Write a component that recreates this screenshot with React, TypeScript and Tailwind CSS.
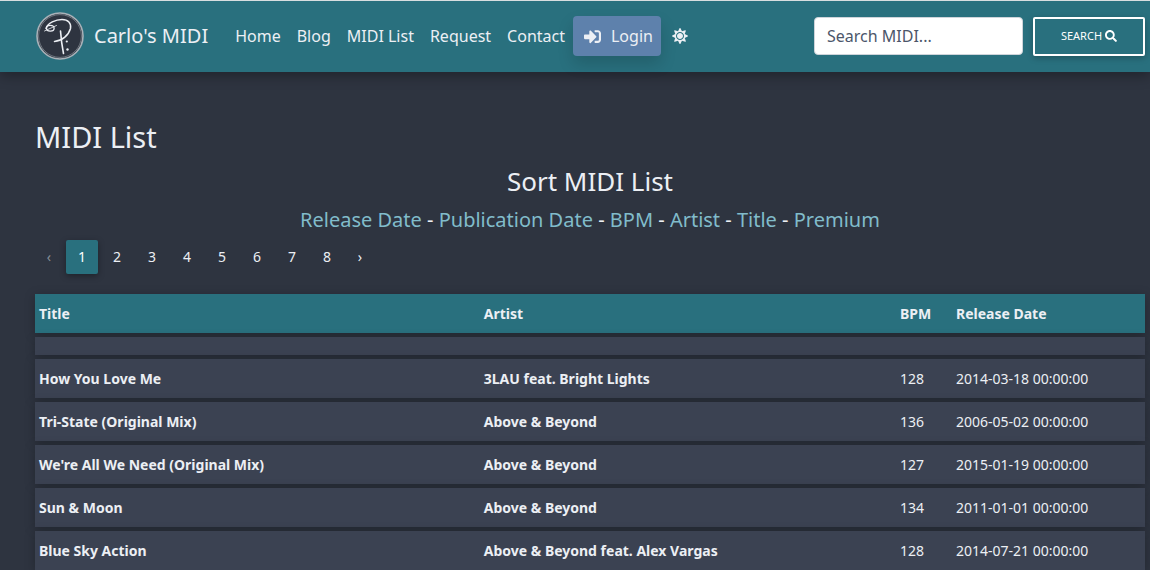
import React from "react";
import { FaSearch, FaSignInAlt, FaSun } from "react-icons/fa";

const navItems = ["Home", "Blog", "MIDI List", "Request", "Contact"];
const sortKeys = ["Release Date", "Publication Date", "BPM", "Artist", "Title", "Premium"];
const pages = [1, 2, 3, 4, 5, 6, 7, 8];

type Track = { title: string; artist: string; bpm: number; date: string };

const tracks: Track[] = [
  { title: "How You Love Me", artist: "3LAU feat. Bright Lights", bpm: 128, date: "2014-03-18 00:00:00" },
  { title: "Tri-State (Original Mix)", artist: "Above & Beyond", bpm: 136, date: "2006-05-02 00:00:00" },
  { title: "We're All We Need (Original Mix)", artist: "Above & Beyond", bpm: 127, date: "2015-01-19 00:00:00" },
  { title: "Sun & Moon", artist: "Above & Beyond", bpm: 134, date: "2011-01-01 00:00:00" },
  { title: "Blue Sky Action", artist: "Above & Beyond feat. Alex Vargas", bpm: 128, date: "2014-07-21 00:00:00" },
];

function Logo() {
  return (
    <svg viewBox="0 0 48 48" className="size-12" aria-hidden="true">
      <circle cx="24" cy="24" r="23" fill="#2e3440" stroke="#a9b1b8" strokeWidth="1.6" />
      <circle cx="24" cy="24" r="21.4" fill="none" stroke="#7d858e" strokeWidth="0.8" />
      <g fill="none" stroke="#eceff4" strokeLinecap="round" strokeLinejoin="round">
        <path
          d="M10 16.5C11.5 11 20 7.5 26 7.5C32 7.5 35.5 11 34.5 16.5C32.5 23.5 26 29 18.5 29.5"
          strokeWidth="1.5"
        />
        <ellipse cx="14.3" cy="16.2" rx="3.8" ry="2.9" strokeWidth="1.3" />
        <path d="M8.5 19L20.5 13.5" strokeWidth="0.8" />
        <path d="M24.5 19C25 26 26 34 27.5 41.5" strokeWidth="1.6" />
      </g>
      <circle cx="30.8" cy="29.5" r="1.1" fill="#eceff4" />
      <circle cx="31.5" cy="37.5" r="1.2" fill="#eceff4" />
    </svg>
  );
}

function Header() {
  return (
    <header className="relative flex items-center border-t border-[#d8dee0] bg-[#29707e] pb-3 pl-9 pr-[5px] pt-[11px] shadow-[0_4px_12px_rgba(0,0,0,0.3)]">
      <a href="#home" className="mr-[19px] flex items-center gap-[10px] text-xl">
        <Logo />
        <span className="whitespace-nowrap">Carlo's MIDI</span>
      </a>
      <nav aria-label="Main" className="flex items-center whitespace-nowrap text-base">
        {navItems.map((item) => (
          <a key={item} href="#nav" className="px-2 py-2">
            {item}
          </a>
        ))}
        <a
          href="#login"
          className="flex h-10 items-center gap-[10px] rounded bg-[#5e81ac] pl-[11px] pr-2 shadow-[0_8px_16px_rgba(0,0,0,0.15)]"
        >
          <FaSignInAlt className="size-[17px]" />
          Login
        </a>
        <button type="button" aria-label="Toggle theme" className="px-[11px] py-2">
          <FaSun className="size-4" />
        </button>
      </nav>
      <form className="ml-auto flex items-center gap-[10px]" onSubmit={(e) => e.preventDefault()}>
        <input
          type="search"
          aria-label="Search MIDI"
          placeholder="Search MIDI..."
          className="h-[38px] w-[209px] rounded border border-[#ced4da] bg-white px-3 text-base text-[#495057] placeholder:text-[#4c566a]"
        />
        <button
          type="submit"
          className="flex h-[39px] w-28 items-center justify-center gap-[3px] rounded-[2px] border-2 border-white text-[11px] text-white shadow-[0_2px_6px_rgba(0,0,0,0.25)]"
        >
          SEARCH
          <FaSearch className="size-3" />
        </button>
      </form>
    </header>
  );
}

function Pagination() {
  return (
    <nav aria-label="Pages" className="flex h-[34px] gap-[3px] text-sm">
      <span className="flex w-7 items-center justify-center text-[#868e96]">‹</span>
      {pages.map((page) => (
        <a
          key={page}
          href="#page"
          aria-current={page === 1 ? "page" : undefined}
          className={
            page === 1
              ? "flex w-8 items-center justify-center rounded-[2px] bg-[#29707e] text-white shadow-[0_2px_6px_rgba(0,0,0,0.35)]"
              : "flex w-8 items-center justify-center"
          }
        >
          {page}
        </a>
      ))}
      <a href="#next" aria-label="Next page" className="flex w-7 items-center justify-center">
        ›
      </a>
    </nav>
  );
}

function TrackTable() {
  return (
    <table className="mt-4 w-full table-fixed border-separate border-spacing-x-0 border-spacing-y-1 text-left text-sm leading-[19px]">
      <colgroup>
        <col />
        <col className="w-[37.5%]" />
        <col className="w-14" />
        <col className="w-[193px]" />
      </colgroup>
      <thead>
        <tr className="bg-[#29707e] shadow-[0_2px_10px_rgba(0,0,0,0.25)]">
          {["Title", "Artist", "BPM", "Release Date"].map((heading) => (
            <th key={heading} className="px-1 py-[10px] font-bold">
              {heading}
            </th>
          ))}
        </tr>
      </thead>
      <tbody>
        <tr className="h-[18px] bg-[#3b4252] shadow-[0_2px_10px_rgba(0,0,0,0.25)]">
          <td colSpan={4} />
        </tr>
        {tracks.map((track) => (
          <tr key={track.title} className="bg-[#3b4252] shadow-[0_2px_10px_rgba(0,0,0,0.25)]">
            <td className="px-1 py-[10px] font-bold">
              <a href="#track">{track.title}</a>
            </td>
            <td className="px-1 py-[10px] font-bold">
              <a href="#artist">{track.artist}</a>
            </td>
            <td className="px-1 py-[10px]">{track.bpm}</td>
            <td className="px-1 py-[10px]">{track.date}</td>
          </tr>
        ))}
      </tbody>
    </table>
  );
}

export default function App() {
  return (
    <div className="h-screen overflow-hidden bg-[#2e3440] font-['Noto_Sans',sans-serif] text-[#eceff4]">
      <Header />
      <main className="pl-[35px] pr-[5px] pt-[47px]">
        <h1 className="text-[29px] leading-9">MIDI List</h1>
        <section className="mt-[9px] text-center">
          <h2 className="text-[26px] leading-[34px]">Sort MIDI List</h2>
          <p className="mt-2 text-xl leading-7">
            {sortKeys.map((key, i) => (
              <React.Fragment key={key}>
                {i > 0 && " - "}
                <a href="#sort" className="text-[#81bccb]">
                  {key}
                </a>
              </React.Fragment>
            ))}
          </p>
        </section>
        <div className="mt-[6px]">
          <Pagination />
        </div>
        <TrackTable />
      </main>
    </div>
  );
}
